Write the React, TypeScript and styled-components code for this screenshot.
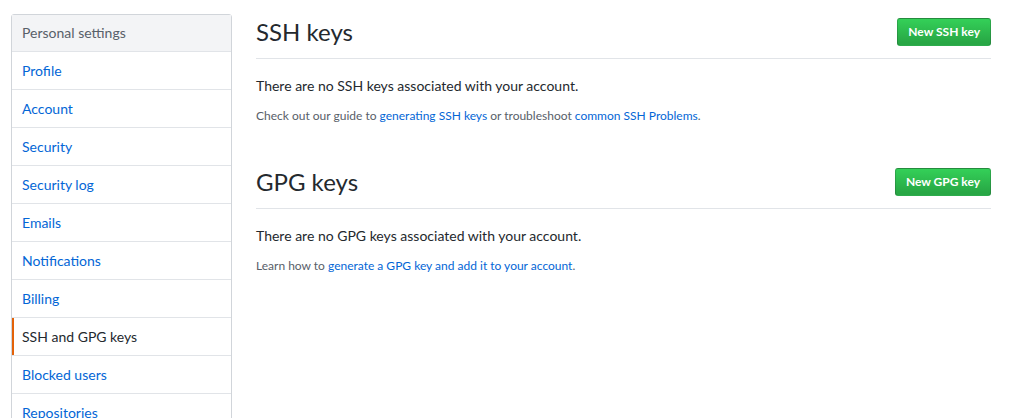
import styled, { createGlobalStyle } from 'styled-components';

const GlobalStyle = createGlobalStyle`
  body {
    margin: 0;
    background: #fff;
    font-family: Lato, "Liberation Sans", Arial, sans-serif;
    font-size: 14px;
    color: #24292e;
  }
`;

const Page = styled.div`
  display: flex;
  align-items: flex-start;
  padding: 14px 20px 0 11px;
`;

const Menu = styled.nav`
  width: 221px;
  flex-shrink: 0;
  border: 1px solid #d1d5da;
  border-radius: 3px;
  box-sizing: border-box;
`;

const MenuHeading = styled.div`
  padding: 8px 10px;
  line-height: 20px;
  font-size: 14px;
  color: #586069;
  background: #f3f4f6;
  border-bottom: 1px solid #e1e4e8;
`;

const MenuItem = styled.a<{ $selected?: boolean }>`
  display: block;
  padding: 8px 10px;
  line-height: 21px;
  font-size: 14px;
  text-decoration: none;
  border-bottom: 1px solid #e1e4e8;
  color: ${(p) => (p.$selected ? '#24292e' : '#0366d6')};
  box-shadow: ${(p) => (p.$selected ? 'inset 2px 0 0 #e36209' : 'none')};
`;

const Main = styled.main`
  flex: 1;
  margin-left: 24px;
`;

const Section = styled.section`
  & + & {
    margin-top: 39px;
  }
`;

const Subhead = styled.div`
  display: flex;
  align-items: center;
  justify-content: space-between;
  padding-bottom: 8px;
  border-bottom: 1px solid #e1e4e8;
`;

const Heading = styled.h2`
  margin: 0;
  font-size: 24px;
  font-weight: 400;
  line-height: 36px;
`;

const Button = styled.button`
  padding: 3px 10px;
  font-family: inherit;
  font-size: 12px;
  font-weight: 700;
  line-height: 20px;
  color: #fff;
  background: linear-gradient(-180deg, #34d058 0%, #28a745 90%);
  border: 1px solid rgba(27, 31, 35, 0.2);
  border-radius: 3px;
  cursor: pointer;
`;

const Blank = styled.p`
  margin: 16px 0 0;
  line-height: 21px;
`;

const Note = styled.p`
  margin: 11px 0 0;
  font-size: 12px;
  line-height: 18px;
  color: #586069;

  a {
    color: #0366d6;
    text-decoration: none;
  }
`;

const items = [
  'Profile',
  'Account',
  'Security',
  'Security log',
  'Emails',
  'Notifications',
  'Billing',
  'SSH and GPG keys',
  'Blocked users',
  'Repositories',
];

const App = () => (
  <>
    <GlobalStyle />
    <Page>
      <Menu>
        <MenuHeading>Personal settings</MenuHeading>
        {items.map((item) => (
          <MenuItem key={item} href="#" $selected={item === 'SSH and GPG keys'}>
            {item}
          </MenuItem>
        ))}
      </Menu>

      <Main>
        <Section>
          <Subhead>
            <Heading>SSH keys</Heading>
            <Button>New SSH key</Button>
          </Subhead>
          <Blank>There are no SSH keys associated with your account.</Blank>
          <Note>
            Check out our guide to <a href="#">generating SSH keys</a> or troubleshoot{' '}
            <a href="#">common SSH Problems</a>.
          </Note>
        </Section>

        <Section>
          <Subhead>
            <Heading>GPG keys</Heading>
            <Button>New GPG key</Button>
          </Subhead>
          <Blank>There are no GPG keys associated with your account.</Blank>
          <Note>
            Learn how to <a href="#">generate a GPG key and add it to your account</a>.
          </Note>
        </Section>
      </Main>
    </Page>
  </>
);

export default App;
